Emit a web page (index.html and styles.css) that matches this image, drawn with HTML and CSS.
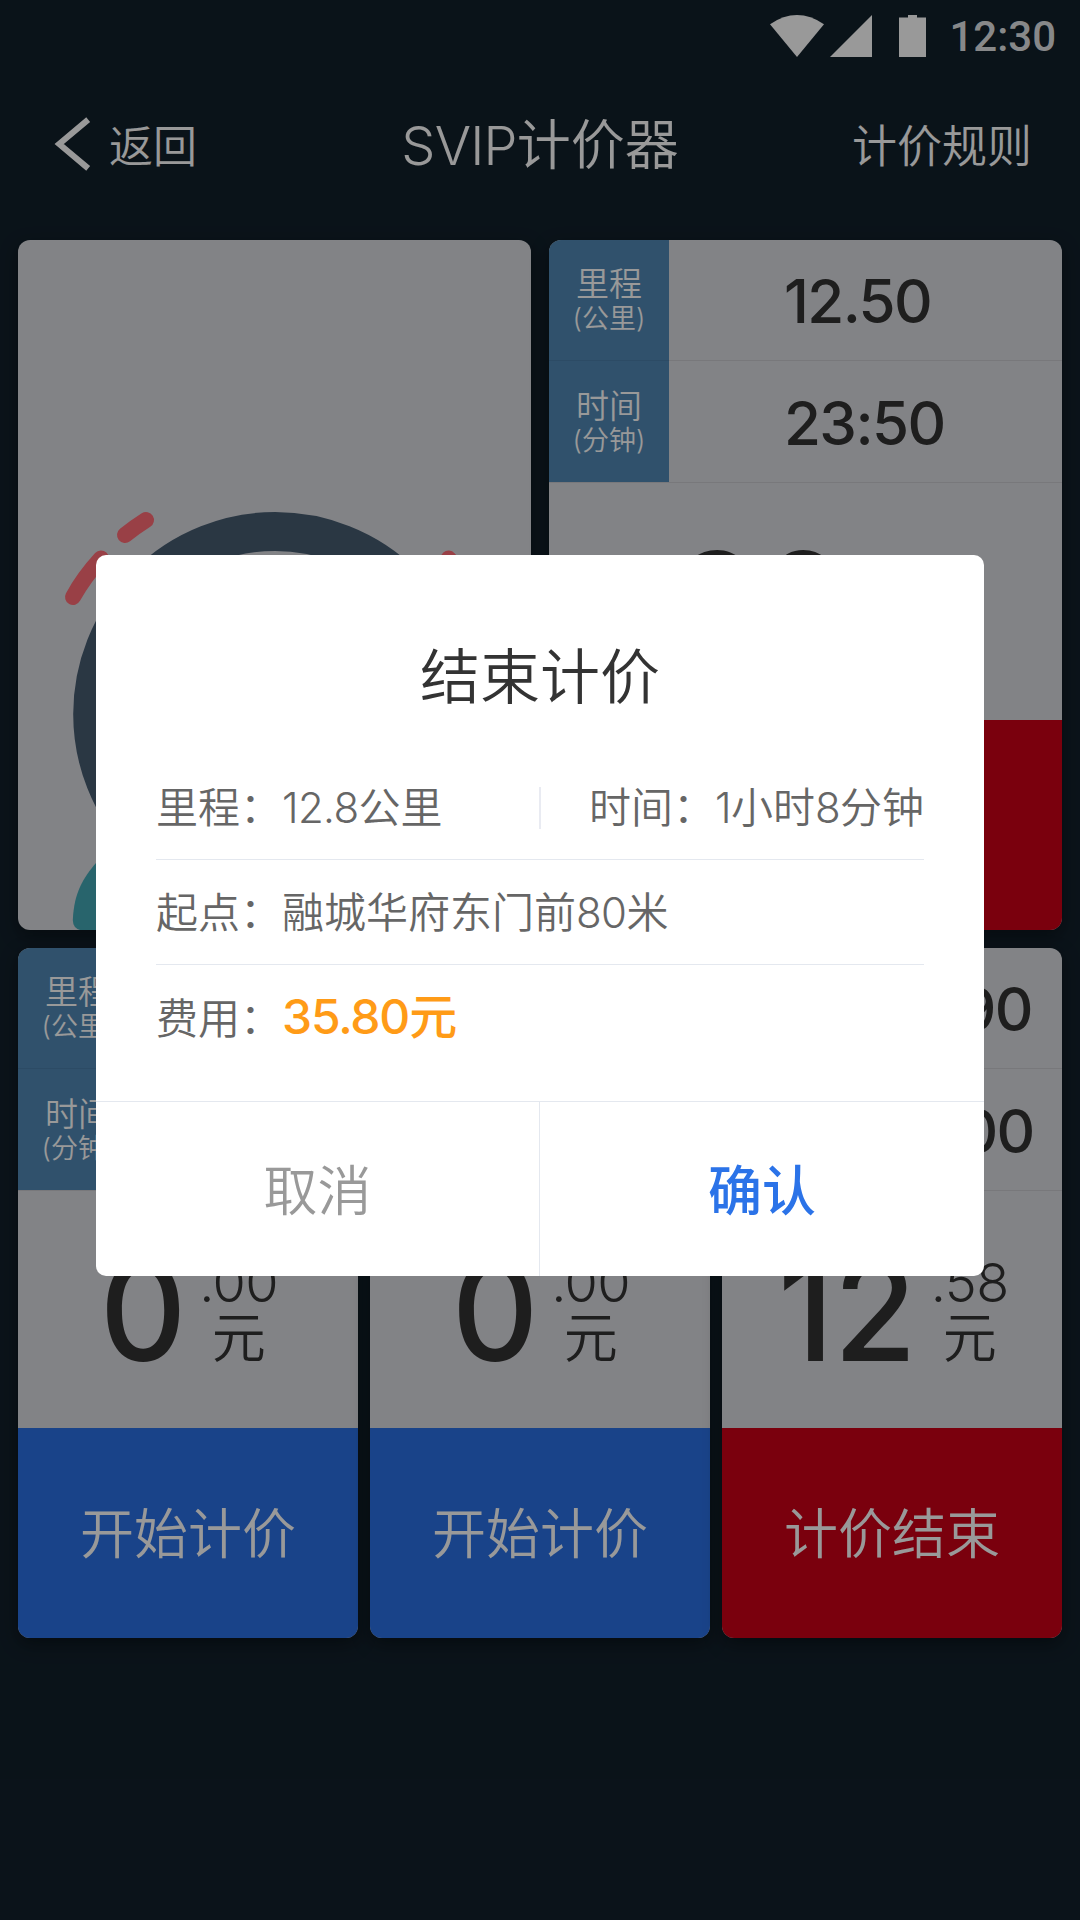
FILE: index.html
```html
<!DOCTYPE html>
<html lang="zh-CN">
<head>
<meta charset="utf-8">
<title>SVIP计价器</title>
<link rel="stylesheet" href="styles.css">
</head>
<body>
<div class="screen">
  <div class="status">
    <svg class="status-icons" width="156" height="42" viewBox="0 0 156 42" fill="#fff">
      <path d="M0 9.2Q27-9.2 54 9.2L27 42Z"/>
      <path d="M60 42L102 0V42Z"/>
      <path d="M129 2.6H138V0H147V2.6H156V42H129Z"/>
    </svg>
    <span class="clock">12:30</span>
  </div>

  <header class="header">
    <a class="back"><svg width="38" height="54" viewBox="0 0 38 54" fill="none" stroke="#fff" stroke-width="6"><path d="M34.2 2.6L5.2 27L34.2 51.4"/></svg><span>返回</span></a>
    <h1 class="title"><span class="latin">SVIP</span>计价器</h1>
    <a class="rules">计价规则</a>
  </header>

  <main class="cards">
    <div class="row row-two">
      <section class="card photo">
        <svg width="513" height="690" viewBox="18 240 513 690" fill="none">
          <circle cx="275.2" cy="714" r="182.5" stroke="#465c71" stroke-width="39"/>
          <g stroke="#ff6b75" stroke-width="16" stroke-linecap="round">
            <path d="M146 520Q135 527 125 535"/>
            <path d="M101 558.5Q84 577 73 597"/>
            <path d="M448.6 558.5Q465 577 477 597"/>
          </g>
          <path d="M80 930Q73 928 72.8 920C74 893 83 878 96 863Q112 848 130 840H420Q476 860 477 920Q477 928 470 930Z" fill="#44a7b4"/>
        </svg>
      </section>
      <section class="card wide">
        <div class="metric"><div class="label"><b>里程</b><i>(公里)</i></div><div class="value">12.50</div></div>
        <div class="metric"><div class="label"><b>时间</b><i>(分钟)</i></div><div class="value">23:50</div></div>
        <div class="price"><span class="whole">36</span><span class="part"><span class="cents">.44</span><span>元</span></span></div>
        <div class="action stop">计价结束</div>
      </section>
    </div>
    <div class="row row-three">
      <section class="card">
        <div class="metric"><div class="label"><b>里程</b><i>(公里)</i></div><div class="value">0.00</div></div>
        <div class="metric"><div class="label"><b>时间</b><i>(分钟)</i></div><div class="value">0:00</div></div>
        <div class="price"><span class="whole">0</span><span class="part"><span class="cents">.00</span><span>元</span></span></div>
        <div class="action start">开始计价</div>
      </section>
      <section class="card">
        <div class="metric"><div class="label"><b>里程</b><i>(公里)</i></div><div class="value">0.00</div></div>
        <div class="metric"><div class="label"><b>时间</b><i>(分钟)</i></div><div class="value">0:00</div></div>
        <div class="price"><span class="whole">0</span><span class="part"><span class="cents">.00</span><span>元</span></span></div>
        <div class="action start">开始计价</div>
      </section>
      <section class="card">
        <div class="metric"><div class="label"><b>里程</b><i>(公里)</i></div><div class="value">28.90</div></div>
        <div class="metric"><div class="label"><b>时间</b><i>(分钟)</i></div><div class="value">20:00</div></div>
        <div class="price"><span class="whole">12</span><span class="part"><span class="cents">.58</span><span>元</span></span></div>
        <div class="action stop">计价结束</div>
      </section>
    </div>
  </main>

  <div class="overlay">
    <div class="dialog">
      <h2 class="dialog-title">结束计价</h2>
      <div class="details">
        <div class="detail split"><span>里程：<span class="num">12.8</span>公里</span><span class="bar"></span><span class="right">时间：<span class="num">1</span>小时<span class="num">8</span>分钟</span></div>
        <div class="detail">起点：融城华府东门前<span class="num">80</span>米</div>
        <div class="detail">费用：<span class="fee"><span class="num">35.80</span>元</span></div>
      </div>
      <div class="buttons">
        <div class="button cancel">取消</div>
        <div class="button confirm">确认</div>
      </div>
    </div>
  </div>
</div>
</body>
</html>
```
FILE: styles.css
```css
* { box-sizing: border-box; margin: 0; padding: 0; }

body {
  width: 1080px;
  height: 1920px;
  overflow: hidden;
  font-family: Inter, "Noto Sans CJK SC", sans-serif;
  font-weight: 350;
  color: #333;
}

.screen {
  position: relative;
  width: 1080px;
  height: 1920px;
  background: #12202b;
}

.status {
  display: flex;
  justify-content: flex-end;
  align-items: center;
  height: 72px;
  padding-right: 24px;
  gap: 23px;
}

.clock {
  padding-top: 2px;
  font: 480 42px/72px Roboto, sans-serif;
  color: rgba(255, 255, 255, .9);
}

.header {
  display: grid;
  grid-template-columns: 1fr auto 1fr;
  align-items: center;
  height: 146px;
  padding: 0 48px;
  color: #fff;
  font-size: 45px;
  line-height: 60px;
}

.back { display: flex; align-items: center; gap: 17px; padding-left: 6px; font-size: 44px; }
.back svg { margin-bottom: 3px; }
.back span, .rules { padding-top: 3px; }
.title { padding-top: 1px; font-size: 54px; font-weight: 350; line-height: 72px; }
.latin { letter-spacing: -.8px; }
.rules { text-align: right; }

.cards {
  display: flex;
  flex-direction: column;
  gap: 18px;
  padding: 22px 18px 0;
}

.row { display: grid; height: 690px; }
.row-two { grid-template-columns: repeat(2, 1fr); gap: 18px; }
.row-three { grid-template-columns: repeat(3, 1fr); gap: 12px; }

.card {
  display: flex;
  flex-direction: column;
  overflow: hidden;
  border-radius: 12px;
  background: #d9dadf;
  box-shadow: 0 6px 18px rgba(0, 0, 0, .4);
}

.metric {
  display: flex;
  height: 121px;
  box-shadow: inset 0 -1px #c8c9ce;
}

.metric + .metric { height: 122px; }

.label {
  width: 120px;
  height: 121px;
  padding-top: 27px;
  background: #5087b4;
  box-shadow: inset 0 -1px #4a7da8;
  color: #fff;
  text-align: center;
}

.metric + .metric .label { padding-top: 28px; box-shadow: none; }

.label b, .label i { display: block; font-weight: 350; font-style: normal; }
.label b { font-size: 33px; line-height: 35px; }
.label i { font-size: 27px; line-height: 34px; }

.value {
  flex: 1;
  font-size: 60px;
  font-weight: 500;
  letter-spacing: -1.6px;
  line-height: 122px;
  text-align: center;
}

.metric + .metric .value { line-height: 124px; }
.wide .value { padding-left: 115px; text-align: left; }

.price {
  display: flex;
  flex: 1;
  justify-content: center;
  align-items: center;
  gap: 11px;
  padding-top: 1px;
}

.whole {
  font-size: 140px;
  font-weight: 500;
  line-height: 140px;
  transform: scaleX(.96);
}

.part {
  display: flex;
  flex-direction: column;
  align-items: center;
  padding-top: 2px;
  font-size: 54px;
  line-height: 56px;
}

.cents { letter-spacing: -.5px; }

.action {
  height: 210px;
  padding-top: 3px;
  color: #fff;
  font-size: 54px;
  line-height: 208px;
  text-align: center;
}

.start { background: #2b70e4; }
.stop { background: #cb0017; }

.overlay {
  position: absolute;
  inset: 0;
  padding: 555px 96px 0;
  background: rgba(0, 0, 0, .4);
}

.dialog {
  height: 721px;
  overflow: hidden;
  border-radius: 10px;
  background: #fff;
}

.dialog-title {
  height: 166px;
  padding-top: 77px;
  font-size: 60px;
  font-weight: 350;
  line-height: 90px;
  text-align: center;
}

.details { padding: 34px 60px 0; color: #666; font-size: 42px; }

.detail {
  height: 105px;
  border-bottom: 1px solid #e4e8ef;
  line-height: 106px;
  white-space: nowrap;
}

.detail:last-child { border-bottom: 0; line-height: 107px; }

.split { display: grid; grid-template-columns: 1fr 2px 1fr; align-items: center; }
.bar { height: 42px; background: #e9ebf2; }
.right { text-align: right; }
.num { letter-spacing: -.6px; }
.fee { color: #ff9b17; font-size: 48px; font-weight: 500; line-height: 1; }
.fee .num { letter-spacing: -1.2px; }

.buttons {
  display: grid;
  grid-template-columns: 1fr 1fr;
  height: 175px;
  margin-top: 31px;
  border-top: 1px solid #e4e8ef;
}

.button { padding-top: 3px; font-size: 54px; line-height: 173px; text-align: center; }
.cancel { border-right: 1px solid #e4e8ef; color: #999; }
.confirm { color: #2b73e8; font-weight: 500; }
```
